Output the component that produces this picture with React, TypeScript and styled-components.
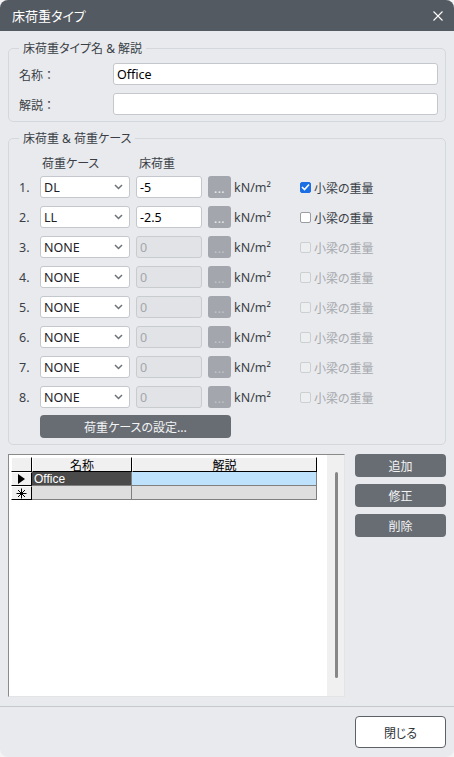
import React from "react";
import styled, { createGlobalStyle } from "styled-components";

const Global = createGlobalStyle`
  html, body { margin: 0; padding: 0; background: #f4f4f4; }
  * { box-sizing: border-box; }
  body {
    font-family: "Noto Sans", "Noto Sans CJK JP", sans-serif;
    font-feature-settings: "palt";
    color: #3a3f47;
  }
`;

const Window = styled.div`
  width: 454px;
  height: 757px;
  background: #e9eaed;
  border-radius: 8px;
  overflow: hidden;
  display: flex;
  flex-direction: column;
`;

const TitleBar = styled.div`
  height: 31px;
  flex: none;
  background: #545a61;
  color: #ffffff;
  display: flex;
  align-items: center;
  justify-content: space-between;
  padding: 0 11px 0 12px;
  font-size: 13px;
  font-family: "Noto Sans CJK JP", sans-serif;
`;

const Body = styled.div`
  flex: 1;
  display: flex;
  flex-direction: column;
  padding: 9px 8px 0;
`;

const Group = styled.fieldset<{ $gap?: number }>`
  margin: 0 0 ${(p) => p.$gap ?? 0}px;
  padding: ${(p) => (p.$gap ? "6px 7px 6px 10px" : "9px 7px 6px 10px")};
  border: 1px solid #d4d7db;
  border-radius: 5px;
  min-width: 0;
`;

const Legend = styled.legend`
  padding: 0 4px;
  margin-left: 0;
  font-size: 12px;
  line-height: 17px;
  color: #3a3f47;
`;

const FieldRow = styled.div`
  display: flex;
  align-items: center;
  height: 22px;
  & + & { margin-top: 8px; }
`;

const FieldLabel = styled.div`
  width: 94px;
  font-size: 12px;
  font-family: "Noto Sans CJK JP", sans-serif;
  font-feature-settings: normal;
`;

const TextBox = styled.div<{ $disabled?: boolean; $w?: number }>`
  height: 22px;
  ${(p) => (p.$w ? `width: ${p.$w}px;` : "flex: 1;")}
  background: ${(p) => (p.$disabled ? "#e1e3e6" : "#ffffff")};
  border: 1px solid ${(p) => (p.$disabled ? "#c9cccf" : "#c4c7cb")};
  border-radius: 3px;
  padding: 0 3px;
  display: flex;
  align-items: center;
  font-size: 12.5px;
  color: ${(p) => (p.$disabled ? "#a4a7ab" : "#000000")};
`;

const HeaderRow = styled.div`
  display: flex;
  height: 16px;
  line-height: 16px;
  font-size: 12px;
  margin-left: 21px;
  margin-bottom: 4px;
`;

const HeaderCell = styled.div<{ $w: number; $pl: number }>`
  width: ${(p) => p.$w}px;
  padding-left: ${(p) => p.$pl}px;
`;

const LoadRow = styled.div`
  display: flex;
  align-items: center;
  height: 22px;
  & + & { margin-top: 8px; }
`;

const Num = styled.div`
  width: 21px;
  font-size: 12.5px;
`;

const Select = styled.div`
  width: 90px;
  height: 22px;
  background: #ffffff;
  border: 1px solid #c4c7cb;
  border-radius: 3px;
  padding: 0 6px 0 3px;
  display: flex;
  align-items: center;
  justify-content: space-between;
  font-size: 12.5px;
  color: #1e2227;
  margin-right: 6px;
`;

const DotsButton = styled.div<{ $disabled?: boolean }>`
  width: 23px;
  height: 22px;
  margin-left: 6px;
  border-radius: 3px;
  background: #a3a7ad;
  color: ${(p) => (p.$disabled ? "#c3c6ca" : "#eef0f2")};
  font-size: 12px;
  line-height: 12px;
  display: flex;
  align-items: flex-end;
  justify-content: center;
  padding-bottom: 3px;
  letter-spacing: 0.5px;
`;

const Unit = styled.div`
  width: 69px;
  padding-left: 3px;
  font-size: 12.5px;
  color: #3a3f47;
`;

const CheckWrap = styled.div<{ $disabled?: boolean }>`
  display: flex;
  align-items: center;
  gap: 3px;
  font-size: 12px;
  font-family: "Noto Sans CJK JP", sans-serif;
  color: ${(p) => (p.$disabled ? "#a6a9ad" : "#3a3f47")};
`;

const Box = styled.div<{ $checked?: boolean; $disabled?: boolean }>`
  width: 11px;
  height: 11px;
  border-radius: 2px;
  background: ${(p) => (p.$checked ? "#1b6ee3" : p.$disabled ? "#eceef0" : "#ffffff")};
  border: 1px solid ${(p) => (p.$checked ? "#1b6ee3" : p.$disabled ? "#cdd0d3" : "#9a9da1")};
  display: flex;
  align-items: center;
  justify-content: center;
`;

const DarkButton = styled.div<{ $w?: number; $mt?: number; $ml?: number }>`
  width: ${(p) => (p.$w ? `${p.$w}px` : "100%")};
  height: 23px;
  margin-top: ${(p) => p.$mt ?? 0}px;
  margin-left: ${(p) => p.$ml ?? 0}px;
  border-radius: 4px;
  background: #686d74;
  color: #f3f4f5;
  font-size: 12px;
  font-family: "Noto Sans CJK JP", sans-serif;
  display: flex;
  align-items: center;
  justify-content: center;
`;

const ListSection = styled.div`
  margin-top: 9px;
  height: 243px;
  display: flex;
  gap: 10px;
`;

const GridBox = styled.div`
  width: 337px;
  height: 243px;
  background: #ffffff;
  border-top: 1px solid #8a8a8a;
  border-left: 1px solid #8a8a8a;
  border-right: 1px solid #e4e4e4;
  border-bottom: 1px solid #e4e4e4;
  display: flex;
`;

const TableArea = styled.div`
  flex: 1;
  padding: 2px 0 0 2px;
`;

const Table = styled.div`
  display: grid;
  grid-template-columns: 21px 100px 185px;
  grid-template-rows: 15px 14px 14px;
  font-family: "Noto Sans CJK JP", sans-serif;
  font-size: 12px;
  line-height: 12px;
`;

const HeadCell = styled.div`
  background: #f0f0f0;
  border-top: 1px solid #ffffff;
  border-left: 1px solid #ffffff;
  border-right: 1px solid #000000;
  border-bottom: 1px solid #000000;
  color: #000;
  display: flex;
  align-items: center;
  justify-content: center;
`;

const Cell = styled.div<{ $bg: string; $fg?: string }>`
  background: ${(p) => p.$bg};
  color: ${(p) => p.$fg ?? "#000"};
  border-right: 1px solid #7f7f7f;
  border-bottom: 1px solid #7f7f7f;
  padding-left: 2px;
  display: flex;
  align-items: center;
  font-family: "Liberation Sans", sans-serif;
  font-size: 12px;
`;

const ScrollTrack = styled.div`
  width: 17px;
  background: #f0f0f0;
  display: flex;
  justify-content: center;
`;

const Thumb = styled.div`
  width: 3px;
  height: 206px;
  margin-top: 17px;
  margin-left: 1px;
  border-radius: 2px;
  background: #878787;
`;

const SideButtons = styled.div`
  width: 91px;
  display: flex;
  flex-direction: column;
`;

const Footer = styled.div`
  flex: none;
  border-top: 1px solid #c3c9cc;
  padding: 9px 8px;
  display: flex;
  justify-content: flex-end;
`;

const CloseButton = styled.div`
  width: 91px;
  height: 32px;
  background: #ffffff;
  border: 1px solid #5c6168;
  border-radius: 4px;
  display: flex;
  align-items: center;
  justify-content: center;
  font-size: 12px;
  font-family: "Noto Sans CJK JP", sans-serif;
  color: #2f343a;
`;

const Chevron = () => (
  <svg width="9" height="6" viewBox="0 0 9 6">
    <path d="M1 1 L4.5 4.5 L8 1" fill="none" stroke="#6d7278" strokeWidth="1.5" />
  </svg>
);

const Tick = () => (
  <svg width="9" height="8" viewBox="0 0 9 8">
    <path d="M1 4 L3.5 6.5 L8 1.5" fill="none" stroke="#ffffff" strokeWidth="1.6" />
  </svg>
);

const rows = [
  { n: "1.", c: "DL", v: "-5", on: true, checked: true },
  { n: "2.", c: "LL", v: "-2.5", on: true, checked: false },
  { n: "3.", c: "NONE", v: "0", on: false, checked: false },
  { n: "4.", c: "NONE", v: "0", on: false, checked: false },
  { n: "5.", c: "NONE", v: "0", on: false, checked: false },
  { n: "6.", c: "NONE", v: "0", on: false, checked: false },
  { n: "7.", c: "NONE", v: "0", on: false, checked: false },
  { n: "8.", c: "NONE", v: "0", on: false, checked: false },
];

export default function App() {
  return (
    <>
      <Global />
      <Window>
        <TitleBar>
          <span>床荷重タイプ</span>
          <svg width="10" height="10" viewBox="0 0 10 10">
            <path d="M0.5 0.5 L9.5 9.5 M9.5 0.5 L0.5 9.5" stroke="#ffffff" strokeWidth="1.1" />
          </svg>
        </TitleBar>
        <Body>
          <Group $gap={8}>
            <Legend>床荷重タイプ名 &amp; 解説</Legend>
            <FieldRow>
              <FieldLabel>名称：</FieldLabel>
              <TextBox>Office</TextBox>
            </FieldRow>
            <FieldRow>
              <FieldLabel>解説：</FieldLabel>
              <TextBox />
            </FieldRow>
          </Group>
          <Group>
            <Legend>床荷重 &amp; 荷重ケース</Legend>
            <HeaderRow>
              <HeaderCell $w={96} $pl={2}>荷重ケース</HeaderCell>
              <HeaderCell $w={80} $pl={3}>床荷重</HeaderCell>
            </HeaderRow>
            {rows.map((r) => (
              <LoadRow key={r.n}>
                <Num>{r.n}</Num>
                <Select>
                  <span>{r.c}</span>
                  <Chevron />
                </Select>
                <TextBox $w={66} $disabled={!r.on}>{r.v}</TextBox>
                <DotsButton $disabled={!r.on}>...</DotsButton>
                <Unit>kN/m²</Unit>
                <CheckWrap $disabled={!r.on}>
                  <Box $checked={r.checked} $disabled={!r.on}>{r.checked && <Tick />}</Box>
                  <span>小梁の重量</span>
                </CheckWrap>
              </LoadRow>
            ))}
            <DarkButton $w={191} $mt={7} $ml={21}>荷重ケースの設定...</DarkButton>
          </Group>
          <ListSection>
            <GridBox>
              <TableArea>
                <Table>
                  <HeadCell />
                  <HeadCell>名称</HeadCell>
                  <HeadCell>解説</HeadCell>
                  <HeadCell>
                    <svg width="7" height="10" viewBox="0 0 7 10">
                      <path d="M0 0 L7 5 L0 10 Z" fill="#000" />
                    </svg>
                  </HeadCell>
                  <Cell $bg="#4a4a4a" $fg="#ffffff">Office</Cell>
                  <Cell $bg="#bee2fc" />
                  <HeadCell>
                    <svg width="11" height="11" viewBox="0 0 11 11">
                      <path d="M5.5 0.5 V10.5 M0.5 5.5 H10.5 M2 2 L9 9 M9 2 L2 9" stroke="#000" strokeWidth="1" />
                    </svg>
                  </HeadCell>
                  <Cell $bg="#dedede" />
                  <Cell $bg="#dedede" />
                </Table>
              </TableArea>
              <ScrollTrack>
                <Thumb />
              </ScrollTrack>
            </GridBox>
            <SideButtons>
              <DarkButton>追加</DarkButton>
              <DarkButton $mt={7}>修正</DarkButton>
              <DarkButton $mt={7}>削除</DarkButton>
            </SideButtons>
          </ListSection>
        </Body>
        <Footer>
          <CloseButton>閉じる</CloseButton>
        </Footer>
      </Window>
    </>
  );
}
